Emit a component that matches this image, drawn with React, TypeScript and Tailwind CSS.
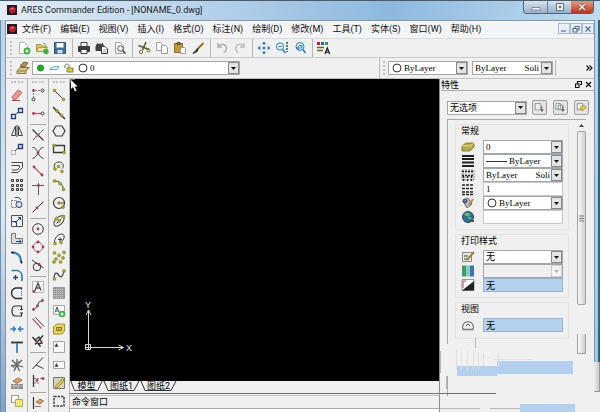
import type { ReactNode } from 'react';
import clsx from 'clsx';

const NAVY = '#2b3f7c';
const BLUE = '#2f7fb5';
const ROSE = '#b0606e';
const OLIVE = '#7d7a1c';
const INK = '#3a3a3a';

function Icon({ children, size = 14 }: { children: ReactNode; size?: number }) {
  return (
    <svg width={size} height={size} viewBox="0 0 14 14" fill="none" stroke={INK} strokeWidth="1" className="shrink-0" aria-hidden="true">
      {children}
    </svg>
  );
}

// Small round grip used on the sketch tools
function Dot({ x, y, c = '#b9b436' }: { x: number; y: number; c?: string }) {
  return <circle cx={x} cy={y} r="1.4" fill={c} stroke={OLIVE} strokeWidth="0.7" />;
}

function Node({ x, y }: { x: number; y: number }) {
  return <circle cx={x} cy={y} r="1.4" fill="#9c4258" stroke="none" />;
}

type Tool = { label: string; icon: ReactNode } | 'sep';

const standardTools: Tool[] = [
  { label: '新建', icon: <><path d="M2.5 1.5h5l3 3v8h-8z" fill="#fff" stroke="#a9b4bb" /><circle cx="10" cy="10" r="3.4" fill="#3fae49" stroke="none" /><path d="M10 8.2v3.6M8.2 10h3.6" stroke="#fff" /></> },
  { label: '打开', icon: <><path d="M1.5 10.5v-7h4l1 1.5h5v5.5z" fill="#d8c56c" stroke="#b09a3d" /><path d="M1.5 10.5l2-4h9l-2 4z" fill="#efe3a0" stroke="#b09a3d" /><circle cx="11" cy="10.5" r="2.7" fill="#3fae49" stroke="none" /><path d="M8 2l3 1.5" stroke="#5aa35d" /></> },
  { label: '保存', icon: <><path d="M1.5 1.5h11v11h-11z" fill="#3c6f9e" stroke="#2b557d" /><path d="M3.5 2h7v4.5h-7z" fill="#fff" stroke="none" /><path d="M4.5 9h5v3.5h-5z" fill="#cfdfea" stroke="none" /></> },
  'sep',
  { label: '打印', icon: <><path d="M4 1.5h6v4H4z" fill="#fff" /><path d="M1.5 5.5h11v5h-11z" fill="#3d3d3d" /><path d="M4 8.5h6v4H4z" fill="#fff" /></> },
  { label: '批打印', icon: <><path d="M1 5.5l1.5-3h5l1 3v4H1z" fill="#444" /><path d="M3 2.5h4" stroke="#bbb" /><path d="M6.5 5.5h3.5l2.5 2.5v4.5h-6z" fill="#fff" /><path d="M8 9h3M8 11h3" stroke="#999" /></> },
  { label: '打印预览', icon: <><path d="M2.5 1.5h5l3 3v8h-8z" fill="#fff" stroke="#a0a0a0" /><circle cx="7.5" cy="7.5" r="2.8" fill="#e6eef3" stroke="#555" /><path d="M9.5 9.5l3 3" stroke="#444" strokeWidth="1.5" /></> },
  'sep',
  { label: '剪切', icon: <><path d="M1.5 4.5l10.5 4M9 1L5.5 9" stroke="#5a5a3a" strokeWidth="1.5" /><circle cx="4" cy="10.8" r="1.7" stroke="#777025" /><circle cx="11.5" cy="9.5" r="1.6" stroke="#777025" /></> },
  { label: '复制', icon: <><path d="M1.5 1.5h4l2 2v6h-6z" fill="#fff" stroke="#9ca39e" /><path d="M6.5 4.5h4l2 2v6h-6z" fill="#fff" stroke="#8f9d94" /></> },
  { label: '粘贴', icon: <><path d="M1.5 2.5h8v9h-8z" fill="#c9952f" stroke="#8e6a22" /><path d="M4 1.5h3v2H4z" fill="#777" stroke="#555" /><path d="M7.5 6.5h4l1 1v5h-5z" fill="#fff" stroke="#999" /></> },
  { label: '特性刷', icon: <><path d="M12.5 2L6 8.5" stroke="#8d6d1e" strokeWidth="1.8" /><path d="M6.8 7.5L2 12.5l4.5-2.2z" fill="#2b2b2b" stroke="#2b2b2b" /></> },
  'sep',
  { label: '撤销', icon: <path d="M3 2v4h4M3.3 5.5c3-3.5 8-2.5 8 2 0 2-1 3.3-2.5 4.2" stroke="#b0b0b0" strokeWidth="1.5" /> },
  { label: '重做', icon: <path d="M11 2v4H7M10.7 5.5c-3-3.5-8-2.5-8 2 0 2 1 3.3 2.5 4.2" stroke="#c0c0c0" strokeWidth="1.5" /> },
  'sep',
  { label: '平移', icon: <path d="M7 .5l2.2 2.8H4.8zM7 13.5l2.2-2.8H4.8zM.5 7l2.8-2.2v4.4zM13.5 7l-2.8-2.2v4.4zM5.7 5.7h2.6v2.6H5.7z" fill="#2f74b0" stroke="none" /> },
  { label: '动态缩放', icon: <><circle cx="5" cy="5.5" r="3.6" stroke={BLUE} fill="#e2f0f8" /><path d="M7.5 8.5l3 3.5" stroke={BLUE} strokeWidth="1.6" /><path d="M3.5 5.5h3" stroke={BLUE} /><path d="M12 1v10" stroke="#1e5c90" strokeWidth="1.6" strokeDasharray="2 1" /></> },
  { label: '上一缩放', icon: <><circle cx="7" cy="5.5" r="4" stroke={BLUE} fill="#e2f0f8" /><path d="M10 8.5l2.5 3.5" stroke={BLUE} strokeWidth="1.6" /><path d="M6 4.5h3v2.5H4M6 5L4 7l2 2" stroke={BLUE} /></> },
  'sep',
  { label: '工具调色板', icon: <><path d="M0 1h3v3H0z" fill="#9b2d42" stroke="none" /><path d="M4 1h3v3H4z" fill="#3c5ba7" stroke="none" /><path d="M8 1h3v3H8z" fill="#36965c" stroke="none" /><path d="M0 6.5h7M0 9.5h6" stroke="#6b6922" strokeWidth="1.4" /><path d="M8 13l2.3-6 2.4 6M8.8 11.2h3" stroke="#222" strokeWidth="1.3" /></> },
];

const modifyTools: Tool[] = [
  { label: '删除', icon: <><path d="M2 9l6-7 4 2.5-5.5 6.5-3 .5z" fill="#e39a92" stroke="#b96a63" /><path d="M2 12.5h8" stroke="#8b4a46" /></> },
  { label: '复制对象', icon: <><path d="M1.5 8.5h4v4h-4zM8.5 2.5h4v4h-4z" stroke={NAVY} strokeWidth="1.3" /><path d="M5 9l4-4" stroke={NAVY} /></> },
  { label: '镜像', icon: <path d="M5.5 2L1.5 11.5h4zM8.5 2l4 9.5h-4zM7 1v12" stroke="#444" /> },
  { label: '移动', icon: <><path d="M1.5 8.5h4v4h-4z" stroke="#888" strokeDasharray="1 1" /><path d="M8.5 2.5h4v4h-4z" stroke={NAVY} fill="#cdd9f0" strokeWidth="1.3" /><path d="M5 9l3.5-3.5" stroke={NAVY} /></> },
  { label: '偏移', icon: <path d="M1.5 2.5h11v5l-4.5 5H1.5M1.5 5.5h8v2L7 10H2" stroke="#444" /> },
  { label: '阵列', icon: <path d="M1.5 1.5h2v2h-2zM6.5 1.5h2v2h-2zM10.5 1.5h2v2h-2zM1.5 6.5h2v2h-2zM6.5 6.5h2v2h-2zM10.5 6.5h2v2h-2zM1.5 10.5h2v2h-2zM6.5 10.5h2v2h-2zM10.5 10.5h2v2h-2z" stroke="#333" /> },
  { label: '旋转', icon: <><path d="M1.5 4.5h5v7h-5z" stroke="#777" strokeDasharray="1.5 1" /><circle cx="9" cy="8.5" r="3" stroke={NAVY} fill="#d8e1f5" /><path d="M5 1.5c3-.5 5 .5 6 2.5" stroke={NAVY} /></> },
  { label: '比例', icon: <><path d="M1.5 1.5h11v11h-11z" stroke="#555" /><path d="M1.5 7.5h5v5M5 9l6-6M8 3.5h2.5V6" stroke={NAVY} /></> },
  { label: '拉伸', icon: <><path d="M1.5 1.5h4v5h7v5h-11z" fill="#ddd" stroke="#777" /><path d="M6 9.5h5M9 7.5l2 2-2 2" stroke={NAVY} /></> },
  { label: '圆角', icon: <><path d="M2 2.5c6 0 9 3 9 10" stroke={BLUE} strokeWidth="2" /><path d="M1 2.5h3M11.5 11v2.5" stroke="#222" strokeWidth="1.5" /></> },
  { label: '倒角', icon: <><path d="M1.5 2.5H7c3 .5 5 3 5 5.5V13" stroke={BLUE} strokeWidth="1.7" /><path d="M3 9.5h5M5.5 7v5" stroke={NAVY} strokeWidth="1.3" /></> },
  { label: '打断', icon: <><path d="M11.5 3V2H5.5C2.5 3 1.5 5 1.5 7s1 4 4 5.5h6v-1" stroke="#333" strokeWidth="1.4" /><path d="M11.5 3v8" stroke={BLUE} strokeDasharray="1 1" /></> },
  { label: '在点打断', icon: <path d="M11.5 5.5V2H5.5C2.5 2 2 4 2 7s.5 5 3.5 5h6V9M10 5.5h3M10 9h3" stroke="#333" strokeWidth="1.2" /> },
  { label: '合并', icon: <path d="M.5 7h4.5M13.5 7H9M3 4.5L5.5 7 3 9.5M11 4.5L8.5 7l2.5 2.5" stroke={BLUE} strokeWidth="1.3" /> },
  { label: '修剪', icon: <><path d="M1 2.5h12" stroke="#333" strokeWidth="1.8" /><path d="M7 3v10" stroke={BLUE} strokeWidth="1.7" /></> },
  { label: '分解', icon: <><path d="M7 7L2 2M7 7l5-5M7 7l-6 1M7 7l6 2M7 7l-3 6M7 7l2.5 6M7 7V1" stroke="#4c5f6e" strokeWidth="1.3" /><path d="M3 10l3-3M9 3l-2 4" stroke="#9a8a4a" strokeWidth="1.3" /></> },
  { label: '编辑填充', icon: <><path d="M1 8h12v5H1z" fill="#8c8c86" stroke="none" /><path d="M1 10h12M4 8v5M8 8v5" stroke="#ddd" strokeWidth="0.6" /><path d="M3 5l5-3 4 2-5 3.5z" fill="#d9a469" stroke="#a66f3d" /></> },
  { label: '绘图次序', icon: <><path d="M1.5 1.5h7v7h-7z" fill="#fff" stroke="#999" /><path d="M5.5 5.5h7v7h-7z" fill="#f1e67e" stroke="#b5a94e" /></> },
];

const snapTools: Tool[] = [
  { label: '临时追踪点', icon: <><path d="M2.5 10V2.5H10" stroke={ROSE} strokeDasharray="2 1" /><Node x={2.5} y={2.5} /><circle cx="11.5" cy="2.5" r="1.5" /><circle cx="2.5" cy="11.5" r="1.5" /></> },
  { label: '捕捉自', icon: <><path d="M2 7.5h8" stroke={ROSE} strokeWidth="1.3" /><Node x={2.5} y={7.5} /><circle cx="11.5" cy="7.5" r="1.5" /></> },
  'sep',
  { label: '交点', icon: <><path d="M1.5 1.5l11 11" strokeWidth="1.2" /><path d="M12.5 1.5l-11 11" strokeDasharray="3 1" /><path d="M4.5 9.5l4-4" stroke={ROSE} strokeWidth="1.5" /></> },
  { label: '外观交点', icon: <><path d="M1.5 1.5c4 0 4.500 4 5.500 5.500s2 4.500 5.500 5.500M12.500 1.500C8.500 2 8 5.500 7 7s-2 4.500-5.500 5.500" /><Node x={7} y={7} /></> },
  { label: '端点', icon: <><path d="M3 3l8 8" stroke={ROSE} strokeWidth="1.3" /><Node x={3} y={3} /><Node x={11} y={11} /></> },
  { label: '垂足', icon: <><path d="M1 3.5h12M7.5 1v12" stroke="#6d5557" /><Node x={7.5} y={3.5} /></> },
  { label: '最近点', icon: <><path d="M1.5 12.5l11-11" /><Node x={6} y={8} /></> },
  'sep',
  { label: '圆心', icon: <><circle cx="7" cy="7" r="5.3" /><Node x={7} y={7} /></> },
  { label: '象限点', icon: <><circle cx="7" cy="7" r="4.7" stroke={ROSE} /><Node x={7} y={2} /><Node x={7} y={12} /><Node x={2} y={7} /><Node x={12} y={7} /></> },
  { label: '切点', icon: <><circle cx="6" cy="9" r="3.8" /><path d="M1 2l11.5 8" /><Node x={8} y={6.5} /></> },
  'sep',
  { label: '插入点', icon: <><path d="M1.5 1.5h11v11h-11z" fill="#f5f5f5" stroke="#b5b5b5" /><path d="M4 10.5L7 3l3 7.5M5 8h4" stroke="#555" strokeWidth="1.4" /><Node x={3} y={11.5} /></> },
  { label: '节点', icon: <><path d="M2.5 11.5l4-3 1-4 4.5-2.5" stroke={NAVY} /><Node x={2.5} y={11.5} /><Node x={6.5} y={8} /><Node x={11.5} y={2.5} /></> },
  { label: '平行', icon: <><path d="M1.5 2.5l9 10" stroke={ROSE} strokeWidth="1.3" /><path d="M4.5 1.5l8.5 9" /></> },
  { label: '延长', icon: <><path d="M1.5 3l8 9.5M4 10.5L12 1.5M4 6l4-3 3 6-4 1" strokeWidth="1.4" stroke="#333" /><Node x={6} y={8} /></> },
  'sep',
  { label: '无捕捉', icon: <path d="M1.5 13L12 1.5M5 9l7.5 3.5" /> },
  { label: '捕捉设置', icon: <><path d="M2.5 1v12" strokeWidth="1.3" /><path d="M3 4.5h9M3 9h5" stroke={ROSE} strokeDasharray="2 1" /><Node x={6} y={6.5} /><Node x={12} y={4.5} /></> },
  'sep',
  { label: '捕捉列表', icon: <><path d="M2.5 1v12" strokeWidth="1.3" /><path d="M5 6l4-3 3.5 2L9 8z" fill="#d9a469" stroke="#a66f3d" /><path d="M4 10.5h6" stroke={ROSE} /></> },
];

const drawTools: Tool[] = [
  { label: '直线', icon: <><path d="M2.5 2.5l9 9" /><Dot x={2.5} y={2.5} /><Dot x={11.5} y={11.5} /></> },
  { label: '构造线', icon: <><path d="M1 1l12 12" strokeWidth="1.5" /><Dot x={5} y={5} /><Dot x={9.5} y={9.5} /></> },
  { label: '多边形', icon: <path d="M4 2h6l3 5-3 5H4L1 7z" strokeWidth="1.2" /> },
  { label: '矩形', icon: <><path d="M1.5 3.5h11v7h-11z" strokeWidth="1.3" /><Dot x={2} y={3.5} /><Dot x={12} y={10.5} /></> },
  { label: '多段线', icon: <><path d="M3 9C1 5 3 2 7 2s6 4 3 6.5" /><Dot x={3} y={9} /><Dot x={6.5} y={6.5} /><Dot x={10} y={11.5} /></> },
  { label: '圆弧', icon: <><path d="M2.5 3c5 0 8 3 9 8.5" /><Dot x={2.5} y={3} /><Dot x={8} y={5.5} /><Dot x={11.5} y={11.5} /></> },
  { label: '圆', icon: <><circle cx="7" cy="7" r="5.5" strokeWidth="1.2" /><path d="M7 7h5" /><Dot x={7} y={7} /><Dot x={11} y={11} /></> },
  { label: '椭圆', icon: <><ellipse cx="7" cy="7" rx="6.3" ry="3.6" transform="rotate(-45 7 7)" /><path d="M4.5 9.5l5-5" /><Dot x={7} y={7} /><Dot x={11.5} y={2.5} /><Dot x={4.5} y={4.5} /></> },
  { label: '椭圆弧', icon: <><path d="M3 11C1 9 5 2 9.5 2c4 0 3 5 .5 7" /><path d="M6 7.5h4M8 5.5v4" /><Dot x={3} y={11.5} /><Dot x={9} y={10.5} /></> },
  { label: '点', icon: <><Dot x={2.5} y={3} /><Dot x={7} y={5.5} /><Dot x={12} y={2.5} /><Dot x={4} y={9} /><Dot x={11} y={8} /><Dot x={2} y={12} /><Dot x={8.5} y={12} /></> },
  { label: '样条曲线', icon: <><path d="M2 11.5C2 4 5 4 6.5 7s4 3 5.5-4.5" strokeWidth="1.2" /><Dot x={2.5} y={11} /><Dot x={12} y={3} /></> },
  { label: '填充', icon: <><path d="M1.5 1.5h11v11h-11z" fill="#9c9c9c" stroke="#999" /><path d="M2 3.5h10M2 5.5h10M2 7.5h10M2 9.5h10M2 11.5h10" stroke="#c8c8c8" strokeDasharray="1 1" /></> },
  { label: '注释', icon: <><path d="M1.5 1.5h11v9h-11z" fill="#fff" stroke="#a8a8a8" /><path d="M3 8.5L5 3l2 5.5M4 7h2" stroke="#555" /><circle cx="10" cy="10" r="3.3" fill="#35b04a" stroke="none" /><path d="M10 8.2v3.6M8.2 10h3.6" stroke="#fff" /></> },
  { label: '块', icon: <><path d="M1.5 5l3-3h8v7l-2.5 3h-8.5z" fill="#e7d35e" stroke="#a2902f" /><path d="M4.5 5.5h5v3h-5zM6 7h2" stroke="#84731d" /></> },
  { label: '多行文字', icon: <><path d="M1.5 1.5h11v11h-11z" fill="#f7f7f7" stroke="#a5a5a5" /><path d="M3 6.5L4.5 3.5 6 6.5z" fill="#333" stroke="#333" strokeWidth="0.5" /></> },
  { label: '文字', icon: <><path d="M1.5 3.5h11v7h-11z" fill="#f7f7f7" stroke="#a5a5a5" /><path d="M3 8.5L4.5 5.5 6 8.5z" fill="#333" stroke="#333" strokeWidth="0.5" /></> },
  { label: '区域', icon: <><path d="M1.5 1.5h11v11h-11z" fill="#d5d4b8" stroke="#777" /><path d="M3 11l7.5-8 2 1L5 12z" fill="#f0dc52" stroke="#8b7b1e" /></> },
  { label: '修订云', icon: <path d="M2 2.5h10v9.5H2z" strokeWidth="1.5" strokeDasharray="2.5 1" stroke="#444" /> },
];

const menus = ['文件(F)', '编辑(E)', '视图(V)', '插入(I)', '格式(O)', '标注(N)', '绘制(D)', '修改(M)', '工具(T)', '实体(S)', '窗口(W)', '帮助(H)'];

const solid = 'ByLayer\u00a0\u00a0\u00a0\u00a0\u00a0\u00a0\u00a0\u00a0Soli';

function AppLogo() {
  return (
    <svg width="10" height="10" viewBox="0 0 10 10" className="shrink-0" aria-hidden="true">
      <rect width="10" height="10" fill="#27181d" />
      <path d="M2 3l4-1.5 3 2-1 4-4 1L2 6z" fill="#b3202e" />
      <path d="M3 3.5l3-1 1.5 1.5-3 1z" fill="#e2656c" />
    </svg>
  );
}

function Grip({ vertical }: { vertical?: boolean }) {
  return (
    <span
      className={clsx(
        'block shrink-0',
        vertical ? 'h-[14px] border-l-2 border-dotted border-[#c4c4c4]' : 'mx-1 border-t-2 border-dotted border-[#c4c4c4]',
      )}
    />
  );
}

function SideBar({ label, tools }: { label: string; tools: Tool[] }) {
  return (
    <div role="toolbar" aria-label={label} className="w-[21px] shrink-0 overflow-hidden border-r border-[#b4b4b4] pt-0.5">
      <Grip />
      <div className="mt-[3px] flex flex-col">
        {tools.map((tool, i) =>
          tool === 'sep' ? (
            <span key={i} className="mx-0.5 flex h-1 items-center"><span className="h-px w-full bg-[#a5a5a5]" /></span>
          ) : (
            <button key={i} type="button" aria-label={tool.label} className="flex h-[18px] shrink-0 items-center justify-center">
              <Icon>{tool.icon}</Icon>
            </button>
          ),
        )}
      </div>
    </div>
  );
}

type ComboProps = { label: string; value: string; icon?: ReactNode; className?: string; disabled?: boolean; cjk?: boolean };

function Combo({ label, value, icon, className, disabled, cjk }: ComboProps) {
  return (
    <div className={clsx('relative flex h-[14px] items-center border border-[#a3a7ab]', disabled ? 'bg-[#f0f0f0]' : 'bg-white', className)}>
      {icon}
      <select
        aria-label={label}
        disabled={disabled}
        className={clsx(
          'h-3 min-w-0 flex-1 appearance-none bg-transparent pl-[2px] pr-[11px] leading-3 text-black outline-none',
          cjk ? 'text-[9px]' : 'font-["Liberation_Serif",serif] text-[9px]',
        )}
      >
        <option>{value}</option>
      </select>
      <span className={clsx('pointer-events-none absolute inset-y-0 right-0 flex w-[11px] items-center justify-center border', disabled ? 'border-[#d0d0d0] bg-[#f4f4f4]' : 'border-[#8a8a8a] bg-[#e4e4e4]')}>
        <svg width="5" height="3" viewBox="0 0 5 3"><path d="M0 0h5L2.5 3z" fill={disabled ? '#b5b5b5' : '#111'} /></svg>
      </span>
    </div>
  );
}

function Ring() {
  return <svg width="10" height="10" viewBox="0 0 10 10" className="ml-[3px] shrink-0" aria-hidden="true"><circle cx="5" cy="5" r="4" fill="#fff" stroke="#333" /></svg>;
}

function Group({ title, children }: { title: string; children: ReactNode }) {
  return (
    <section className="rounded-xs border border-[#e2e2e2] px-[5px]">
      <h2 className="h-[15px] text-[9px] leading-3">{title}</h2>
      {children}
    </section>
  );
}

function Row({ icon, children }: { icon: ReactNode; children: ReactNode }) {
  return (
    <div className="flex h-[14px] items-center">
      <span className="flex w-[22px] shrink-0"><Icon>{icon}</Icon></span>
      {children}
    </div>
  );
}

function Field({ label, value, blue }: { label: string; value: string; blue?: boolean }) {
  return (
    <input
      aria-label={label}
      defaultValue={value}
      className={clsx(
        'h-[14px] w-20 border px-[2px] text-[9px] leading-3 text-black outline-none',
        blue ? 'border-[#9db4cf] bg-[#b3d0ee]' : 'border-[#c8c8c8] bg-white font-["Liberation_Serif",serif]',
      )}
    />
  );
}

function TitleBar() {
  return (
    <header className="flex h-5 shrink-0 items-start border-t border-[#4b5b69] bg-linear-to-r from-[#e3edf6] via-[#8db9df] via-65% to-[#bfdcf0] pl-[7px] pr-1.5">
      <span className="mt-1"><AppLogo /></span>
      <h1 className="ml-1 mt-[3px] text-[9px] leading-3 whitespace-nowrap text-[#1b1b1b]">ARES Commander Edition - [NONAME_0.dwg]</h1>
      <div className="ml-auto flex overflow-hidden rounded-b-sm border border-t-0 border-[#50657a]">
        <button type="button" aria-label="最小化" className="flex h-3 w-6 items-center justify-center border-r border-[#6c8196] bg-linear-to-b from-[#d7e4ef] to-[#95b1cb]">
          <svg width="10" height="8" viewBox="0 0 10 8"><path d="M1 4.5h8v2.5H1z" fill="#fff" stroke="#56687a" strokeWidth="0.7" /></svg>
        </button>
        <button type="button" aria-label="最大化" className="flex h-3 w-[23px] items-center justify-center bg-linear-to-b from-[#d7e4ef] to-[#95b1cb]">
          <svg width="10" height="8" viewBox="0 0 10 8"><path d="M1.5.5h7v7h-7z" fill="#fff" stroke="#56687a" /><path d="M4 3h2v2H4z" fill="#8ba5bd" stroke="#56687a" strokeWidth="0.7" /></svg>
        </button>
        <button type="button" aria-label="关闭" className="flex h-3 w-[22px] items-center justify-center bg-linear-to-b from-[#df9787] to-[#b9301b]">
          <svg width="8" height="8" viewBox="0 0 8 8"><path d="M1 1l6 6M7 1L1 7" stroke="#6b2a21" strokeWidth="2.6" /><path d="M1 1l6 6M7 1L1 7" stroke="#fff" strokeWidth="1.6" /></svg>
        </button>
      </div>
    </header>
  );
}

function MenuBar() {
  const mdi = ['M1 6h5', 'M1 3.5h4V7H1zM3 3V1.5h4V5H5.5', 'M1.5 1.5l5 5M6.5 1.5l-5 5'];
  return (
    <nav className="flex h-[18px] shrink-0 items-center border-t border-[#8d9aa6] bg-[#f3f4f6] pb-0.5 pl-px">
      <AppLogo />
      <div className="ml-[5px] flex gap-[9px]">
        {menus.map((m) => (
          <button key={m} type="button" className="text-[9px] leading-3 whitespace-nowrap text-[#111]">{m}</button>
        ))}
      </div>
      <div className="ml-auto flex">
        {mdi.map((d, i) => (
          <button key={d} type="button" aria-label={['最小化图形', '还原图形', '关闭图形'][i]} className="flex h-[11px] w-3 items-center justify-center border border-[#a8bacd] bg-[#e9f0f8]">
            <svg width="8" height="8" viewBox="0 0 8 8"><path d={d} fill="none" stroke="#56708c" strokeWidth="1.2" /></svg>
          </button>
        ))}
      </div>
    </nav>
  );
}

function StandardBar() {
  return (
    <div role="toolbar" aria-label="标准" className="flex h-5 shrink-0 items-center border-b border-[#c9c9c9] border-t border-t-[#dcdcdc] pl-1">
      <Grip vertical />
      <div className="ml-[3px] flex">
        {standardTools.map((tool, i) =>
          tool === 'sep' ? (
            <span key={i} className="flex h-[18px] w-1.5 justify-center"><span className="w-px bg-[#b5b5b5]" /></span>
          ) : (
            <button key={i} type="button" aria-label={tool.label} className="flex h-[18px] w-[18px] items-center justify-center">
              <Icon>{tool.icon}</Icon>
            </button>
          ),
        )}
      </div>
    </div>
  );
}

function LayerBar() {
  return (
    <div className="flex h-5 shrink-0 items-center">
      <div className="flex h-full flex-1 items-center border-r border-[#b9b9b9] pl-1">
        <Grip vertical />
        <button type="button" aria-label="图层管理器" className="ml-0.5 flex w-[18px] justify-center">
          <Icon><path d="M1 10l3-3.5h9L10 10v2.5H1z" fill="#d9c88a" stroke="#8d7a3e" /><path d="M1 10h9l3-3.5" stroke="#8d7a3e" /><path d="M4 5l4-4 4 1-3.5 4.5z" fill="#b88d55" stroke="#7b5a31" /></Icon>
        </button>
        <Combo
          label="图层"
          value="0"
          className="w-[208px]"
          icon={
            <span className="ml-[3px] flex items-center gap-1">
              <svg width="9" height="10" viewBox="0 0 9 10"><circle cx="4.5" cy="5" r="3" fill="#1fae25" stroke="#158a1a" /></svg>
              <svg width="11" height="10" viewBox="0 0 11 10"><path d="M1 6.5c0-2 3-3 8.5-3 1.5 0 0 3-3 3z" fill="#e5f3fa" stroke="#5b9fc0" /></svg>
              <svg width="10" height="10" viewBox="0 0 10 10"><path d="M1 5V3c0-2.5 4-2.5 4 0v2" fill="none" stroke="#666" /><path d="M3 5h6v4H3z" fill="#dccb45" stroke="#8d8126" /></svg>
              <span className="-ml-[3px] flex"><Ring /></span>
            </span>
          }
        />
      </div>
      <div className="ml-[3px] flex items-center">
        <Grip vertical />
        <Combo label="线条颜色" value="ByLayer" icon={<Ring />} className="ml-[3px] w-20" />
        <Combo label="线型" value={solid} className="ml-1 w-[81px]" />
        <span className="ml-0.5 h-4 border-l border-[#b9b9b9]" />
        <button type="button" aria-label="更多" className="ml-[28px] flex w-[10px] justify-center">
          <svg width="7" height="6" viewBox="0 0 7 6"><path d="M.5.5L3 3 .5 5.5M3.5.5L6 3 3.5 5.5" fill="none" stroke="#111" strokeWidth="1.2" /></svg>
        </button>
      </div>
    </div>
  );
}

function DrawingArea() {
  const tabs = [
    { name: '模型', width: 'w-[33px]' },
    { name: '图纸1', width: 'w-[37px]' },
    { name: '图纸2', width: 'w-[37px]' },
  ];
  return (
    <main className="flex min-w-0 flex-1 flex-col">
      <div className="relative flex-1 bg-black">
        <svg width="9" height="14" viewBox="0 0 9 14" className="absolute top-0 left-0"><path d="M0 0h5M0 0v4" stroke="#ccc" /><path d="M1 1v9l2-2 2 4.5 1.5-.7L4.7 7.5h3z" fill="#fff" /></svg>
        <svg width="54" height="54" viewBox="0 0 54 54" className="absolute bottom-7 left-3" fill="none" stroke="#d8d8d8">
          <path d="M3.5 45.5h5v5h-5zM6.5 50V11M4 16l2.5-5L9 16M3 48.5h38M36.5 46l5 2.5-5 2.5" />
          <text x="3" y="9" fill="#e0e0e0" stroke="none" className='font-["Liberation_Sans",sans-serif] text-[9px]'>Y</text>
          <text x="44" y="52" fill="#e0e0e0" stroke="none" className='font-["Liberation_Sans",sans-serif] text-[9px]'>X</text>
        </svg>
      </div>
      <div className="flex h-3 shrink-0">
        {tabs.map((tab) => (
          <button key={tab.name} type="button" className={clsx('relative flex justify-center text-[9px] leading-[10px] whitespace-nowrap', tab.width)}>
            {tab.name}
            <svg className="absolute inset-0 size-full" viewBox="0 0 37 12" preserveAspectRatio="none" fill="none" stroke="#333"><path d="M1 0l4 9.5h26L36 0" /></svg>
          </button>
        ))}
      </div>
      <section className="flex h-[19px] shrink-0 flex-col border-t border-[#6d6d6d]">
        <h2 className="mt-px border-t border-b border-t-[#c4c4c4] border-b-[#a9a9a9] pl-[2px] text-[9px] leading-3">命令窗口</h2>
        <input aria-label="命令行" className="min-h-0 w-full flex-1 bg-white outline-none" />
      </section>
    </main>
  );
}

function Properties() {
  return (
    <aside className="relative flex w-[155px] shrink-0 flex-col overflow-hidden border-l border-[#8e8e8e] pl-px">
      <div className="flex h-3 shrink-0 items-center border-b border-[#a9a9a9]">
        <h2 className="text-[9px] leading-3">特性</h2>
        <button type="button" aria-label="浮动" className="ml-auto flex w-[10px]"><svg width="7" height="7" viewBox="0 0 7 7"><path d="M.5 3h3.5v3.5H.5zM2.5 2.5V.5h4v3H5" fill="none" stroke="#111" strokeWidth="1.2" /></svg></button>
        <button type="button" aria-label="关闭面板" className="flex w-[9px]"><svg width="7" height="7" viewBox="0 0 7 7"><path d="M1 1l5 5M6 1L1 6" stroke="#111" strokeWidth="1.3" /></svg></button>
      </div>
      <div className="mt-[9px] flex shrink-0 items-center pl-1.5">
        <Combo label="选择" value="无选项" cjk className="w-20" />
        <div className="ml-[5px] flex gap-[6px]">
          {['快速选择', '选择对象', '切换添加'].map((name, i) => (
            <button key={name} type="button" aria-label={name} className="flex h-[15px] w-[15px] items-center justify-center rounded-xs border border-[#9e9e9e] bg-[#e4e4e4]">
              <Icon size={11}>
                <path d={i === 1 ? 'M1 2h6v7H1zM4 4h6v6H4z' : 'M1.5 2h7v8h-7z'} fill="#e9eef0" stroke="#888" />
                {i === 2 ? <path d="M5 8l5-4 3 3-5 4z" fill="#e6cf3c" stroke="#998822" /> : <path d="M10 5v6M8.5 9l1.5 3 2-3" stroke="#444" />}
              </Icon>
            </button>
          ))}
        </div>
      </div>
      <div className="mt-1 ml-1.5 mr-[8px] flex min-h-0 flex-1 border-t border-l border-[#a9a9a9]">
        <div className="flex flex-1 flex-col gap-1 px-[7px] pt-1">
          <Group title="常规">
            <Row icon={<><path d="M1 6l4-3h8v4l-4 4H1z" fill="#b7a94a" stroke="#8b8034" /><path d="M1 6h8l4-3" stroke="#e7df9a" /></>}><Combo label="图层" value="0" className="w-20" /></Row>
            <Row icon={<path d="M1 2h12M1 5h12M1 8.5h12M1 12h12" stroke="#222" strokeWidth="2" />}><Combo label="线宽" value="ByLayer" icon={<span className="ml-[2px] h-px w-[21px] shrink-0 bg-[#333]" />} className="w-20" /></Row>
            <Row icon={<><path d="M1 2h12v10H1z" fill="#ddd" stroke="#888" strokeDasharray="2 1" /><path d="M1 3.5h12M1 7.5h12M2.5 8v5M6.5 8v5M10.5 8v5" stroke="#222" strokeWidth="1.4" strokeDasharray="2 1" /></>}><Combo label="线型" value={solid} className="w-20" /></Row>
            <Row icon={<path d="M1 3h12M1 6.5h12M1 10h12M1 12.5h12" stroke="#222" strokeWidth="1.5" strokeDasharray="3 1" />}><Field label="线型比例" value="1" /></Row>
            <Row icon={<><path d="M2 5l5-3 4 6-5 4z" fill="#b9c3c9" stroke="#667" /><path d="M8 9l4-6" stroke="#b98a28" strokeWidth="2" /><circle cx="4" cy="5" r="2" fill="#607d9f" stroke="#445" /></>}><Combo label="颜色" value="ByLayer" icon={<Ring />} className="w-20" /></Row>
            <Row icon={<><circle cx="7" cy="7" r="5.5" fill="#2b6f94" stroke="#234a66" /><path d="M3 5c2-3 5-3 6-1s-3 2-2 4 3 1 4 0" fill="#6cb577" stroke="none" /><path d="M9 11h4" stroke="#555" strokeWidth="2" /></>}><Field label="超链接" value="" /></Row>
            <div className="h-[5px]" />
          </Group>
          <Group title="打印样式">
            <Row icon={<><path d="M1.5 2.5h9v9h-9z" fill="#e9e9e9" stroke="#888" /><path d="M3 6h4M3 9h3" stroke="#333" /><path d="M13 2L6 10" stroke="#a38132" strokeWidth="2" /></>}><Combo label="打印样式" value="无" cjk className="w-20" /></Row>
            <Row icon={<><path d="M1 1.5h4v11H1z" fill="#3f9c6b" stroke="none" /><path d="M5 1.5h4v11H5z" fill="#8cc9c0" stroke="none" /><path d="M9 1.5h4v11H9z" fill="#4271b7" stroke="none" /></>}><Combo label="打印样式表" value="" disabled className="w-20" /></Row>
            <Row icon={<><path d="M1 1.5h12v11H1z" fill="#fff" stroke="#999" /><path d="M1 12.5L13 3v9.5z" fill="#222" stroke="none" /><path d="M2 10V3h3" stroke="#a55" /></>}><Field label="打印表附着" value="无" blue /></Row>
            <div className="h-[5px]" />
          </Group>
          <Group title="视图">
            <Row icon={<><path d="M2 11.5a5.5 5.5 0 1 1 10 0z" fill="#f3f0e8" stroke="#777" strokeWidth="1.3" /><path d="M5 8l2-2 2 2" stroke="#444" /></>}><Field label="视图" value="无" blue /></Row>
            <div className="h-1.5" />
          </Group>
          <div className="mt-[18px] -mr-1 ml-0.5 flex shrink-0">
            <span className="mt-[5px] h-[10px] w-10 bg-[#b3d0ee]" />
            <span className="h-[13px] flex-1 bg-[#b3d0ee]" />
          </div>
          <span className="mt-6 -mr-1.5 ml-[65px] h-2 shrink-0 bg-[#b3d0ee]" />
        </div>
        <div className="flex w-[10px] flex-col items-center">
          <svg width="5" height="11" viewBox="0 0 5 11"><path d="M0 7h5L2.5 4z" fill="#444" /></svg>
          <div className="flex h-[174px] w-[9px] shrink-0 items-center justify-center rounded-xs border border-[#a3a3a3] bg-linear-to-r from-[#fafafa] to-[#d2d2d2]">
            <svg width="5" height="7" viewBox="0 0 5 7"><path d="M0 1h5M0 3.5h5M0 6h5" stroke="#777" /></svg>
          </div>
          <div className="mt-[29px] h-5 w-[9px] shrink-0 border border-t-0 border-[#a3a3a3] bg-linear-to-r from-[#fafafa] to-[#cfcfcf]" />
        </div>
      </div>
      {/* Torn repaint lines left at the foot of the panel */}
      <svg width="153" height="90" viewBox="0 0 153 90" className="pointer-events-none absolute bottom-0 left-0" fill="none">
        <path d="M5 22h9v32H5z" fill="#f0f0f0" />
        <path d="M0 74h30v16H0z" fill="#f0f0f0" />
        <path d="M16.5 28v20M21.5 30v18M27.5 28v20M33.5 28v20M38.5 30v18M43.5 32v12M53 37.5h40M58.5 32v12" stroke="#e2e2e2" />
        <path d="M35.5 16v10M.5 29v22M6.5 54v13" stroke="#b5b5b5" />
        <path d="M0 71.5h56" stroke="#6d6d6d" />
        <path d="M0 86.5h40M50 86.5h30" stroke="#b9b9b9" />
      </svg>
    </aside>
  );
}

export default function App() {
  return (
    <div className='flex h-screen flex-col overflow-hidden bg-[#f0f0f0] font-["Roboto","Noto_Sans_CJK_SC",sans-serif] text-black'>
      <TitleBar />
      <div className="flex min-h-0 flex-1">
        <div className="w-1.5 shrink-0 border-r border-l border-r-[#8296a8] border-l-[#6f8ea8] bg-linear-to-b from-[#b8d3ea] via-[#dce8f3] to-[#7fa3cb]" />
        <div className="flex min-w-0 flex-1 flex-col">
          <MenuBar />
          <StandardBar />
          <LayerBar />
          <div className="flex min-h-0 flex-1 border-t border-[#c0c0c0] pl-px">
            <SideBar label="修改" tools={modifyTools} />
            <SideBar label="捕捉" tools={snapTools} />
            <SideBar label="绘制" tools={drawTools} />
            <DrawingArea />
            <Properties />
          </div>
        </div>
        <div className="flex w-1.5 shrink-0 flex-col">
          <div className="flex-1 border-r-2 border-l border-r-[#2f6478] border-l-[#8296a8] bg-linear-to-b from-[#b9d9ee] to-[#9ccbe2]" />
          <div className="h-[30px] border-r border-b border-[#999] bg-linear-to-r from-[#eee] to-[#c9c9c9]" />
          <div className="h-5 bg-[#f0f0f0]" />
        </div>
      </div>
    </div>
  );
}
